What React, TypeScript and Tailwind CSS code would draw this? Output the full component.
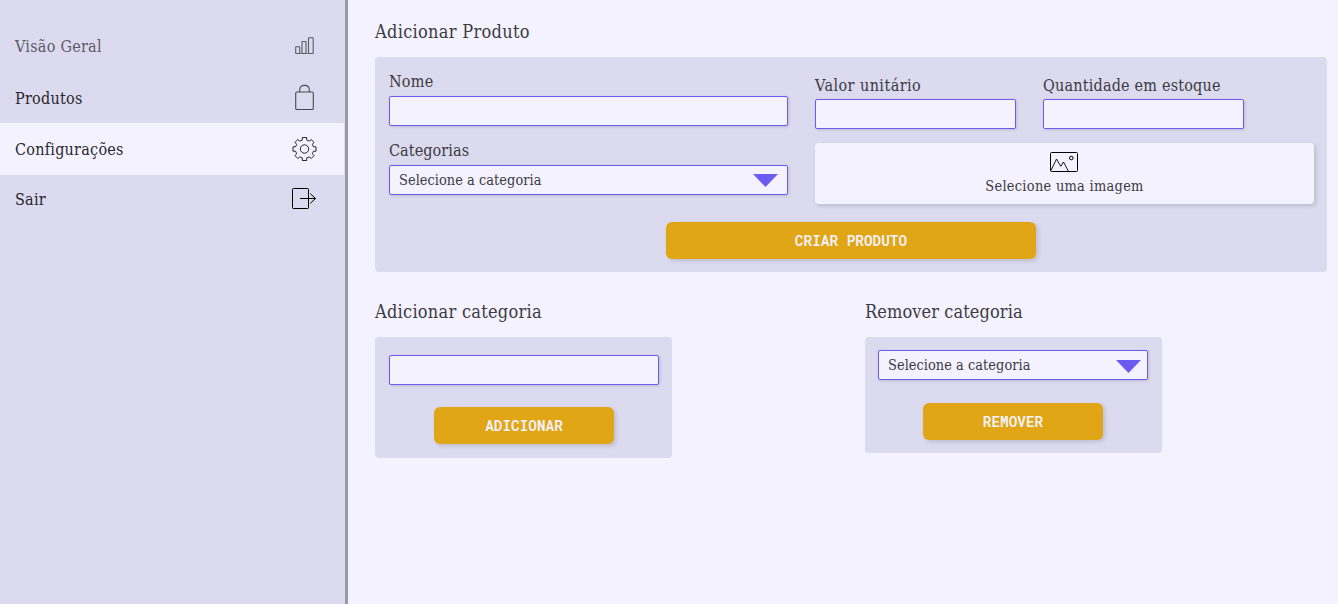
import type { ReactNode } from "react";

const slab = "font-['Roboto_Slab','DejaVu_Serif_Condensed','DejaVu_Serif',serif]";

function ChartIcon() {
  return (
    <svg width="21" height="18" viewBox="0 0 21 18" fill="none" stroke="#5c5b66" strokeWidth="1.1">
      <rect x="1.7" y="9.7" width="4" height="6.8" rx=".5" />
      <rect x="8" y="4.5" width="4" height="12" rx=".5" />
      <rect x="14.5" y=".8" width="4.7" height="15.7" rx=".5" />
      <path d="M5 16.5h10" strokeOpacity=".7" />
    </svg>
  );
}

function BagIcon() {
  return (
    <svg width="21" height="27" viewBox="0 0 21 27" fill="none" stroke="#4a4952" strokeWidth="1.1">
      <rect x="1.7" y="8" width="17.6" height="17.5" rx="1.3" />
      <path d="M5.7 8V6c0-3 1.6-4.6 4.8-4.6S15.3 3 15.3 6v2" />
    </svg>
  );
}

function GearIcon() {
  return (
    <svg width="25" height="26" viewBox="0 0 25 26" fill="none" stroke="#26262b" strokeWidth="1" strokeLinejoin="round">
      <path d="M10.3 1.5h4.4v2.6l2.5 1 2-1.6 2.8 2.8-1.6 2 1 2.5h2.6v4.4h-2.6l-1 2.5 1.6 2-2.8 2.8-2-1.6-2.5 1v2.6h-4.4v-2.6l-2.5-1-2 1.6L3 19.7l1.6-2-1-2.5H1v-4.4h2.6l1-2.5L3 6.3l2.8-2.8 2 1.6 2.5-1Z" />
      <circle cx="12.5" cy="13" r="4.2" />
    </svg>
  );
}

function ExitIcon() {
  return (
    <svg width="25" height="22" viewBox="0 0 25 22" fill="none" stroke="#000" strokeWidth="1">
      <rect x=".5" y=".5" width="16" height="20" rx=".8" />
      <path d="M8 10.5h15.5M18.3 5.7l5.3 4.8-5.3 4.8" />
    </svg>
  );
}

function ImageIcon() {
  return (
    <svg width="29" height="20" viewBox="0 0 29 20" fill="none" stroke="#000">
      <rect x=".5" y=".5" width="27" height="19" rx="1" />
      <path d="M1 18.5 6.5 7l4.3 7.3L13.5 10l4.8 9" strokeWidth=".9" />
      <circle cx="21.3" cy="6" r="1.8" />
    </svg>
  );
}

function NavItem({ label, icon, className }: { label: string; icon: ReactNode; className: string }) {
  return (
    <a className={`flex w-[344px] items-center justify-between pl-[15px] ${className}`}>
      <span className="pt-[2px]">{label}</span>
      <span className="mr-[26px] flex w-[27px] justify-center">{icon}</span>
    </a>
  );
}

function Field({ label, className, text }: { label: string; className: string; text: string }) {
  return (
    <label className="block text-base leading-6">
      <span className={`block ${text}`}>{label}</span>
      <input className={`block h-[30px] rounded-[2px] border border-[#6c5bf0] bg-[#f4f2ff] shadow-[1px_1px_3px_#00000025] outline-none ${className}`} />
    </label>
  );
}

function Select({ className, arrow }: { className: string; arrow: string }) {
  return (
    <button className={`flex h-[30px] items-center justify-between rounded-[2px] border border-[#6c5bf0] bg-[#f4f2ff] pl-[9px] text-[14.4px] tracking-[0.05px] shadow-[1px_1px_3px_#00000025] ${className}`}>
      <span className="pt-[2px]">Selecione a categoria</span>
      <svg width="25" height="13" viewBox="0 0 25 13" className={arrow}>
        <path d="M0 0h25L12.5 13Z" fill="#6c5bf0" />
      </svg>
    </button>
  );
}

function Action({ label, className }: { label: string; className: string }) {
  return (
    <button className={`flex h-[37px] items-center justify-center rounded-[6px] bg-[#e1a615] font-['Roboto_Mono','Liberation_Mono',monospace] text-[14.4px] font-semibold text-[#f4f2ff] shadow-[2px_2px_4px_#00000022] ${className}`}>
      {label}
    </button>
  );
}

export default function App() {
  return (
    <div className={`flex h-[604px] w-[1338px] overflow-hidden bg-[#f4f2ff] text-[#3b3a42] ${slab}`}>
      <aside className="w-[348px] shrink-0 border-r-[3px] border-[#9b9aa4] bg-[#dcdaee] pt-5 text-base tracking-[0.25px] text-[#29282f]">
        <NavItem label="Visão Geral" icon={<ChartIcon />} className="h-[52px] text-[#5d5b66]" />
        <NavItem label="Produtos" icon={<BagIcon />} className="h-[51px]" />
        <NavItem label="Configurações" icon={<GearIcon />} className="h-[52px] bg-[#f4f2ff]" />
        <NavItem label="Sair" icon={<ExitIcon />} className="h-[48px]" />
      </aside>
      <main className="pl-[27px] pt-[18px]">
        <h2 className="text-[18px] leading-7 tracking-[0.3px]">Adicionar Produto</h2>
        <section className="mt-[11px] h-[215px] w-[952px] rounded-[4px] bg-[#dcdaee] pl-[14px] pt-[13px]">
          <div className="flex h-[152px] gap-[27px]">
            <div className="w-[399px]">
              <Field label="Nome" className="w-[399px]" text="pb-[2px] tracking-[0.25px]" />
              <div className="mt-[13px] text-base leading-6 tracking-[0.1px]">Categorias</div>
              <Select className="mt-[2px] w-[399px]" arrow="mr-[9px]" />
            </div>
            <div className="pt-[3px]">
              <div className="flex gap-[27px]">
                <Field label="Valor unitário" className="w-[201px]" text="pb-px pt-px tracking-[0.45px]" />
                <Field label="Quantidade em estoque" className="w-[201px]" text="pb-px pt-px tracking-[0.2px]" />
              </div>
              <button className="mt-[14px] flex h-[61px] w-[499px] flex-col items-center rounded-[4px] bg-[#f4f2ff] pt-[9px] text-[14.4px] tracking-[0.3px] shadow-[2px_2px_4px_#00000022]">
                <ImageIcon />
                <span className="mt-[4px] leading-5">Selecione uma imagem</span>
              </button>
            </div>
          </div>
          <Action label="CRIAR PRODUTO" className="ml-[277px] w-[370px]" />
        </section>
        <div className="mt-[26px] flex gap-[193px]">
          <section className="w-[297px]">
            <h2 className="text-[18px] leading-7 tracking-[0.27px]">Adicionar categoria</h2>
            <div className="mt-[11px] h-[121px] rounded-[4px] bg-[#dcdaee] pl-[14px] pt-[18px]">
              <input className="block h-[30px] w-[270px] rounded-[2px] border border-[#6c5bf0] bg-[#f4f2ff] shadow-[1px_1px_3px_#00000025] outline-none" />
              <Action label="ADICIONAR" className="ml-[45px] mt-[22px] w-[180px]" />
            </div>
          </section>
          <section className="w-[297px]">
            <h2 className="text-[18px] leading-7 tracking-[0.1px]">Remover categoria</h2>
            <div className="mt-[11px] h-[116px] rounded-[4px] bg-[#dcdaee] pl-[13px] pt-[13px]">
              <Select className="w-[270px]" arrow="mr-[6px] mt-[3px]" />
              <Action label="REMOVER" className="ml-[45px] mt-[23px] w-[180px]" />
            </div>
          </section>
        </div>
      </main>
    </div>
  );
}
